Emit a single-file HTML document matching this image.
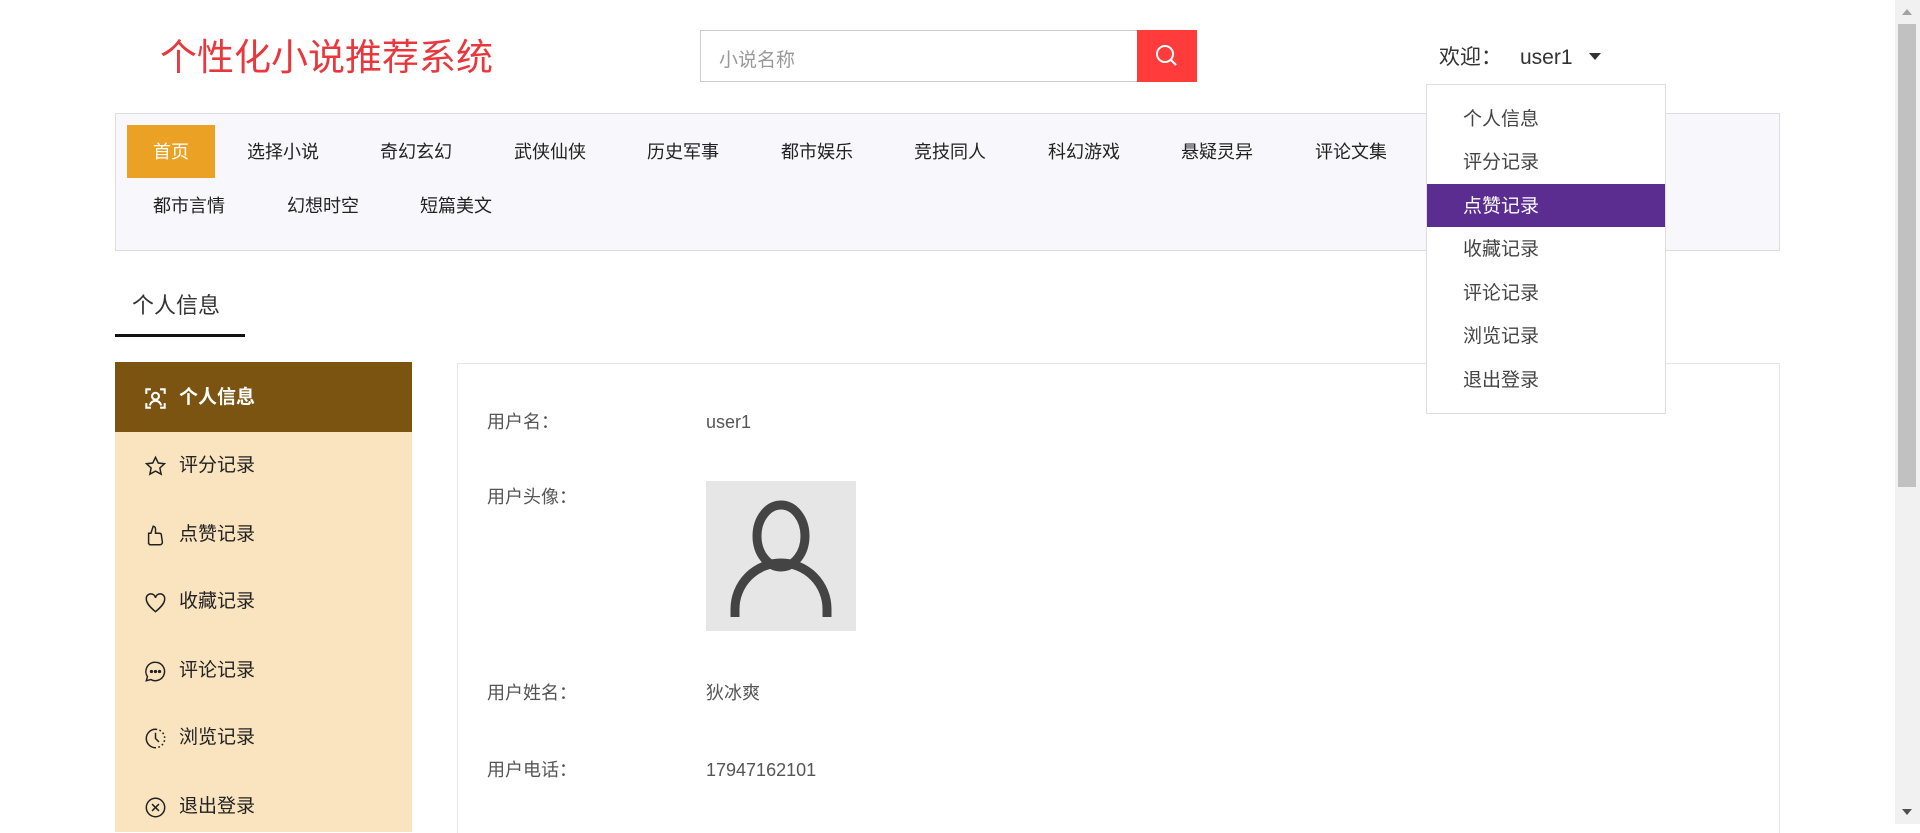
<!DOCTYPE html>
<html><head><meta charset="utf-8"><style>
*{margin:0;padding:0;box-sizing:border-box}
body{width:1920px;height:824px;overflow:hidden;background:#fff;font-family:"Liberation Sans","Noto Sans CJK SC",sans-serif;color:#333;position:relative}
.a{position:absolute;white-space:nowrap}
.title{left:160px;top:36px;font-size:37px;color:#e8383d;line-height:44px}
.search{left:700px;top:30px;width:438px;height:52px;border:1px solid #ccc;border-right:none}
.search span{position:absolute;left:18px;top:14px;font-size:19px;color:#999}
.btn{left:1137px;top:30px;width:60px;height:52px;background:#ff3b3b}
.nav{left:115px;top:113px;width:1665px;height:138px;background:#f8f8fc;border:1px solid #ddd}
.ni{font-size:18px;color:#222;line-height:24px}
.dd{left:1426px;top:84px;width:240px;height:330px;background:#fff;border:1px solid #ddd}
.di{position:absolute;left:36px;font-size:19px;color:#444;line-height:24px}
.side{left:115px;top:362px;width:297px;height:470px;background:#fae4bf}
.si{position:absolute;left:64px;font-size:19px;color:#222;line-height:24px}
.ic{position:absolute;left:29px;width:23px;height:23px}
.panel{left:457px;top:363px;width:1323px;height:470px;border:1px solid #e5e5e5;border-bottom:none}
.lb{font-size:18px;color:#555;line-height:24px}
</style></head><body>
<div class="a title">个性化小说推荐系统</div>
<div class="a search"><span>小说名称</span></div>
<div class="a btn"><svg width="60" height="52"><circle cx="28" cy="24" r="8" fill="none" stroke="#fff" stroke-width="2"/><line x1="34" y1="30" x2="39" y2="35" stroke="#fff" stroke-width="2.2"/></svg></div>
<div class="a" style="left:1439px;top:45px;font-size:21px;color:#333;line-height:26px">欢迎：<span style="margin-left:18px">user1</span></div>
<div class="a" style="left:1589px;top:53px;width:0;height:0;border-left:6px solid transparent;border-right:6px solid transparent;border-top:7px solid #333"></div>

<div class="a nav">
<div class="a" style="left:11px;top:11px;width:88px;height:53px;background:#eba224"></div>
<div class="a ni" style="left:37px;top:26px;color:#fff">首页</div>
<div class="a ni" style="left:131px;top:26px">选择小说</div>
<div class="a ni" style="left:264px;top:26px">奇幻玄幻</div>
<div class="a ni" style="left:398px;top:26px">武侠仙侠</div>
<div class="a ni" style="left:531px;top:26px">历史军事</div>
<div class="a ni" style="left:665px;top:26px">都市娱乐</div>
<div class="a ni" style="left:798px;top:26px">竞技同人</div>
<div class="a ni" style="left:932px;top:26px">科幻游戏</div>
<div class="a ni" style="left:1065px;top:26px">悬疑灵异</div>
<div class="a ni" style="left:1199px;top:26px">评论文集</div>
<div class="a ni" style="left:37px;top:80px">都市言情</div>
<div class="a ni" style="left:171px;top:80px">幻想时空</div>
<div class="a ni" style="left:304px;top:80px">短篇美文</div>
</div>

<div class="a" style="left:132px;top:292px;font-size:22px;color:#333;line-height:28px">个人信息</div>
<div class="a" style="left:115px;top:334px;width:130px;height:3px;background:#111"></div>

<div class="a side">
<div class="a" style="left:0;top:0;width:297px;height:70px;background:#7a5410"></div>
<svg class="ic" style="top:25px" viewBox="0 0 20 20" fill="none" stroke="#fff" stroke-width="1.8"><path d="M2 6V2h4M14 2h4v4M2 14v4h4M14 18h4v-4"/><circle cx="10" cy="8" r="3"/><path d="M5 16c1-3 3-4 5-4s4 1 5 4"/></svg>
<div class="si" style="top:24px;color:#fff;font-weight:bold">个人信息</div>
<svg class="ic" style="top:93px" viewBox="0 0 20 20" fill="none" stroke="#222" stroke-width="1.3"><path d="M10 2l2.4 5 5.4.6-4 3.7 1.1 5.4L10 14l-4.9 2.7 1.1-5.4-4-3.7 5.4-.6z"/></svg>
<div class="si" style="top:92px">评分记录</div>
<svg class="ic" style="top:162px" viewBox="0 0 20 20" fill="none" stroke="#222" stroke-width="1.3"><path d="M5 18h9c1 0 2-1 2-2l-1-7c0-1-1-1-2-1H10V4c0-1-1-2-2-2L6 8H4v9z"/></svg>
<div class="si" style="top:161px">点赞记录</div>
<svg class="ic" style="top:229px" viewBox="0 0 20 20" fill="none" stroke="#222" stroke-width="1.3"><path d="M10 18C4 13 2 10 2 7a4 4 0 018-1 4 4 0 018 1c0 3-2 6-8 11z"/></svg>
<div class="si" style="top:228px">收藏记录</div>
<svg class="ic" style="top:298px" viewBox="0 0 20 20" fill="none" stroke="#222" stroke-width="1.3"><path d="M10 2a8 8 0 11-4 15l-4 1 1-3.5A8 8 0 0110 2z"/><circle cx="6.5" cy="10" r=".8" fill="#222"/><circle cx="10" cy="10" r=".8" fill="#222"/><circle cx="13.5" cy="10" r=".8" fill="#222"/></svg>
<div class="si" style="top:297px">评论记录</div>
<svg class="ic" style="top:365px" viewBox="0 0 20 20" fill="none" stroke="#222" stroke-width="1.3"><path d="M10 2a8 8 0 100 16" /><path d="M10 2a8 8 0 010 16" stroke-dasharray="1.5 2"/><path d="M10 5v5l3 3"/></svg>
<div class="si" style="top:364px">浏览记录</div>
<svg class="ic" style="top:434px" viewBox="0 0 20 20" fill="none" stroke="#222" stroke-width="1.3"><circle cx="10" cy="10" r="8"/><path d="M7 7l6 6M13 7l-6 6"/></svg>
<div class="si" style="top:433px">退出登录</div>
</div>

<div class="a panel"></div>
<div class="a lb" style="left:487px;top:410px">用户名：</div>
<div class="a lb" style="left:706px;top:410px">user1</div>
<div class="a lb" style="left:487px;top:485px">用户头像：</div>
<div class="a" style="left:706px;top:481px;width:150px;height:150px;background:#e6e6e6">
<svg width="150" height="150"><ellipse cx="75" cy="55" rx="24" ry="31" fill="none" stroke="#444" stroke-width="9"/><path d="M29 136V128a46 46 0 0192 0v8" fill="none" stroke="#444" stroke-width="9"/></svg></div>
<div class="a lb" style="left:487px;top:681px">用户姓名：</div>
<div class="a lb" style="left:706px;top:681px">狄冰爽</div>
<div class="a lb" style="left:487px;top:758px">用户电话：</div>
<div class="a lb" style="left:706px;top:758px">17947162101</div>

<div class="a dd">
<div class="a" style="left:0;top:99px;width:238px;height:43px;background:#5b2d91"></div>
<div class="di" style="top:23px">个人信息</div>
<div class="di" style="top:66px">评分记录</div>
<div class="di" style="top:110px;color:#fff">点赞记录</div>
<div class="di" style="top:153px">收藏记录</div>
<div class="di" style="top:197px">评论记录</div>
<div class="di" style="top:240px">浏览记录</div>
<div class="di" style="top:284px">退出登录</div>
</div>

<div class="a" style="left:1895px;top:0;width:25px;height:824px;background:#f1f1f1"></div>
<div class="a" style="left:1898px;top:24px;width:18px;height:463px;background:#c1c1c1"></div>
<div class="a" style="left:1902px;top:9px;width:0;height:0;border-left:5px solid transparent;border-right:5px solid transparent;border-bottom:6px solid #a3a3a3"></div>
<div class="a" style="left:1902px;top:809px;width:0;height:0;border-left:5px solid transparent;border-right:5px solid transparent;border-top:6px solid #505050"></div>
</body></html>
